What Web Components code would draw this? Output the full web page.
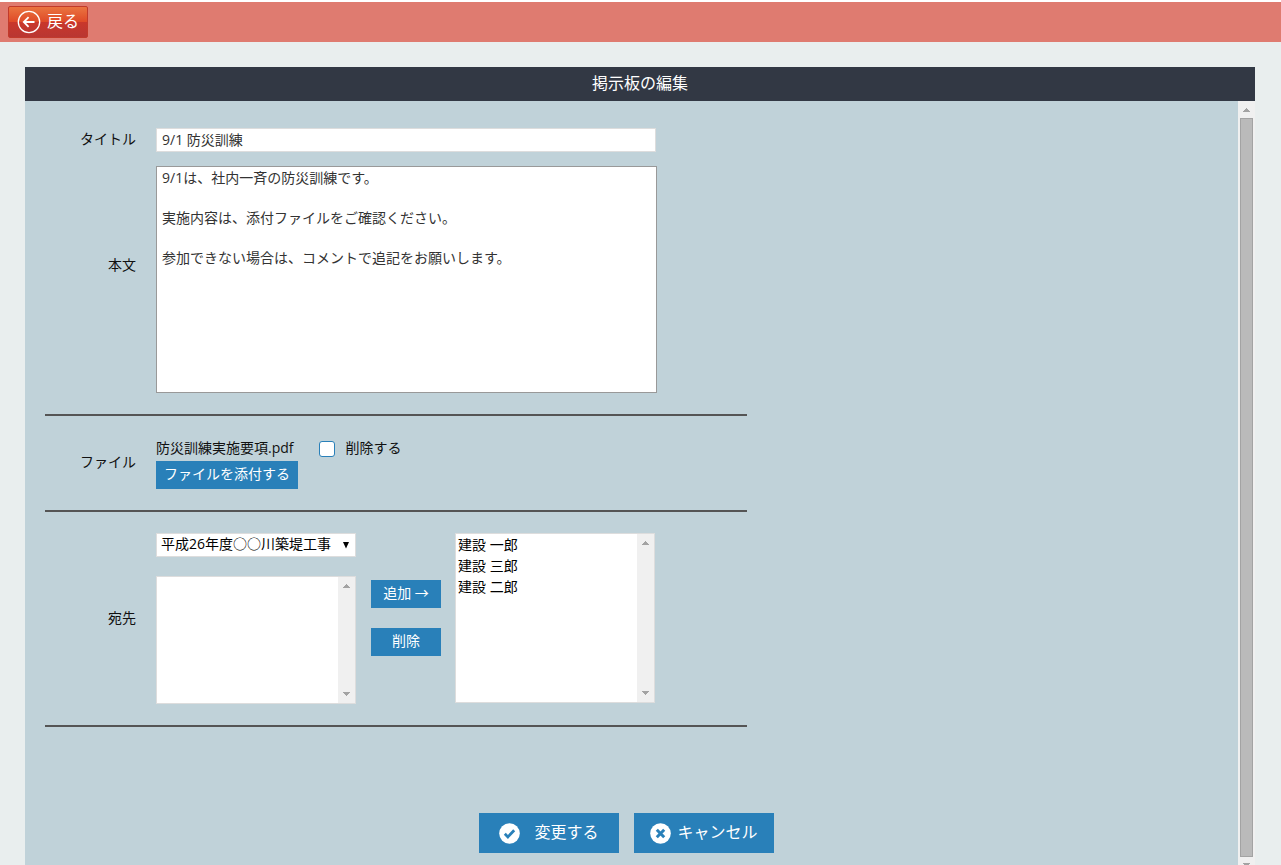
<!DOCTYPE html>
<html lang="ja">
<head>
<meta charset="utf-8">
<meta name="viewport" content="width=device-width, initial-scale=1">
<title>掲示板の編集</title>
<style>
  html { background: #e9eeee; }
  body {
    margin: 0;
    font-family: "Open Sans", "Noto Sans CJK JP", sans-serif;
    font-size: 14px;
    line-height: 20px;
    color: #111;
  }
</style>
</head>
<body>
<bulletin-page>
  <top-bar slot="bar"></top-bar>
  <edit-panel heading="掲示板の編集">
    <bulletin-form></bulletin-form>
  </edit-panel>
</bulletin-page>

<script>
const define = (name, html, setup) => {
  const template = document.createElement('template');
  template.innerHTML = html;
  customElements.define(name, class extends HTMLElement {
    constructor() {
      super();
      this.attachShadow({ mode: 'open' }).append(template.content.cloneNode(true));
    }
    connectedCallback() {
      if (setup) setup(this, this.shadowRoot);
    }
  });
};

define('bulletin-page', `
  <style>
    :host { display: block; height: 100vh; overflow: hidden; }
    main { padding: 25px 26px 25px 25px; }
  </style>
  <slot name="bar"></slot>
  <main><slot></slot></main>
`);

define('top-bar', `
  <style>
    :host { display: block; background: #df7b70; border-top: 2px solid #fff; }
    header { display: flex; padding: 4px 8px; }
    button {
      display: flex; align-items: center; gap: 6px;
      height: 32px; width: 80px; padding: 0 8px;
      border: 1px solid #c23a2b; border-radius: 2px;
      background: linear-gradient(#ea7440, #df4a28 49%, #c9372b 51%, #b93632);
      color: #fff; font: inherit; font-size: 16px; line-height: 24px; white-space: nowrap;
    }
    svg { flex: none; }
    span { padding-bottom: 2px; }
  </style>
  <header>
    <button type="button">
      <svg width="24" height="24" viewBox="0 0 24 24" fill="none" stroke="#fff" aria-hidden="true">
        <circle cx="12" cy="12" r="10.7" stroke-width="1.3"/>
        <path d="M17.5 12H7.2M11.6 7.2L6.8 12l4.8 4.8" stroke-width="1.8"/>
      </svg>
      <span>戻る</span>
    </button>
  </header>
`);

define('edit-panel', `
  <style>
    :host { display: block; }
    h1 {
      margin: 0; padding: 4px 0 6px; background: #323844; color: #fff;
      font-size: 16px; line-height: 24px; font-weight: 400; text-align: center;
    }
    .body { display: flex; background: #c0d2d9; }
    .content { flex: 1; min-width: 0; padding: 27px 20px 21px; }
  </style>
  <h1></h1>
  <div class="body">
    <div class="content"><slot></slot></div>
    <scroll-rail thumb></scroll-rail>
  </div>
`, (host, root) => {
  root.querySelector('h1').textContent = host.getAttribute('heading');
});

define('scroll-rail', `
  <style>
    :host { display: flex; flex-direction: column; align-items: center; width: 17px; flex: none; background: #f0f0f0; }
    svg { flex: none; display: block; fill: #a3a3a3; }
    i { flex: 1; width: 13px; box-sizing: border-box; }
    :host([thumb]) i { background: #bababa; border: 1px solid #a3a3a3; }
  </style>
  <svg width="17" height="17" viewBox="0 0 17 17" aria-hidden="true"><path d="M5 11V10h1V9h1V8h1V7h1v1h1v1h1v1h1v1z"/></svg>
  <i></i>
  <svg width="17" height="17" viewBox="0 0 17 17" aria-hidden="true"><path d="M5 6v1h1v1h1v1h1v1h1V9h1V8h1V7h1V6z"/></svg>
`);

define('form-section', `
  <style>
    :host {
      display: grid; grid-template-columns: 91px 1fr; column-gap: 20px; row-gap: 14px;
      align-items: center; max-width: 702px; box-sizing: border-box;
      padding: 21px 0; border-bottom: 2px solid #555;
    }
    :host([first]) { padding-top: 0; }
  </style>
  <slot></slot>
`);

define('list-frame', `
  <style>
    :host { display: flex; box-sizing: border-box; width: 200px; border: 1px solid #ddd; background: #fff; }
    div { flex: 1; min-width: 0; display: flex; }
  </style>
  <div><slot></slot></div>
  <scroll-rail></scroll-rail>
`);

define('ui-button', `
  <style>
    :host { display: inline-block; }
    button {
      display: flex; align-items: center; justify-content: center; gap: 6px;
      width: 100%; height: 28px; padding: 0 0 2px; border: 0;
      background: #2980b9; color: #fff; font: inherit; line-height: 20px; white-space: nowrap;
    }
    :host([large]) button { height: 40px; padding: 0; font-size: 16px; line-height: 24px; }
    :host([large]) span { padding-bottom: 2px; }
    :host([wide-gap]) button { gap: 14px; }
  </style>
  <button type="button"><slot name="icon"></slot><span><slot></slot></span></button>
`);

define('bulletin-form', `
  <style>
    :host { display: block; }
    form { margin: 0; }
    .name { text-align: right; padding-bottom: 2px; }
    .name.tall { padding-bottom: 30px; }
    input[type=text], textarea, select {
      font: inherit; box-sizing: border-box; margin: 0; border-radius: 0;
      background: #fff; color: #333; border: 1px solid #ddd;
    }
    input[type=text] { width: 500px; height: 24px; padding: 0 5px 2px; }
    textarea { display: block; width: 501px; height: 227px; padding: 1px 5px; border-color: #999; resize: none; line-height: 20px; }
    .file { display: flex; align-items: center; height: 24px; }
    .file span { padding-bottom: 2px; }
    .file label { display: flex; align-items: center; }
    input[type=checkbox] {
      appearance: none; width: 16px; height: 16px; margin: 0 11px 0 25px;
      background: #fff; border: 1px solid #2980b9; border-radius: 3px;
    }
    .attach { display: block; width: 142px; }
    .recipients { display: flex; gap: 14px; align-items: flex-start; }
    .source { display: grid; width: 200px; row-gap: 19px; }
    .picker { display: grid; align-items: center; }
    .picker > * { grid-area: 1 / 1; }
    .picker select { appearance: none; width: 100%; height: 24px; padding: 0 4px 2px; color: #000; }
    .picker svg { justify-self: end; margin-right: 6px; pointer-events: none; }
    list-frame select { flex: 1; width: 100%; height: auto; border: 0; padding: 0; overflow: hidden; color: #000; outline: 0; }
    option { padding: 0 2px; min-height: 21px; line-height: 17px; box-sizing: border-box; }
    .source list-frame { height: 128px; }
    .chosen { height: 170px; }
    .moves { display: grid; width: 70px; gap: 20px; padding: 47px 0 0 1px; }
    .actions { display: flex; justify-content: center; gap: 15px; padding: 86px 10px 0 0; }
    .actions ui-button { width: 140px; }
    .actions svg { display: block; }
  </style>
  <form>
    <form-section first>
      <label class="name" for="title">タイトル</label>
      <input type="text" id="title" value="9/1 防災訓練">
      <label class="name tall" for="body">本文</label>
      <textarea id="body">9/1は、社内一斉の防災訓練です。

実施内容は、添付ファイルをご確認ください。

参加できない場合は、コメントで追記をお願いします。</textarea>
    </form-section>

    <form-section>
      <span class="name">ファイル</span>
      <div>
        <div class="file">
          <span>防災訓練実施要項.pdf</span>
          <label><input type="checkbox"><span>削除する</span></label>
        </div>
        <ui-button class="attach">ファイルを添付する</ui-button>
      </div>
    </form-section>

    <form-section>
      <label class="name" for="project">宛先</label>
      <div class="recipients">
        <div class="source">
          <div class="picker">
            <select id="project"><option>平成26年度○○川築堤工事</option></select>
            <svg width="8" height="8" viewBox="0 0 8 8" aria-hidden="true"><path d="M1 1h6L4 7.5z"/></svg>
          </div>
          <list-frame><select multiple size="5" aria-label="候補"></select></list-frame>
        </div>
        <div class="moves">
          <ui-button>追加 →</ui-button>
          <ui-button>削除</ui-button>
        </div>
        <list-frame class="chosen">
          <select multiple size="7" aria-label="宛先一覧">
            <option>建設 一郎</option>
            <option>建設 三郎</option>
            <option>建設 二郎</option>
          </select>
        </list-frame>
      </div>
    </form-section>

    <div class="actions">
      <ui-button large wide-gap>
        <svg slot="icon" width="21" height="21" viewBox="0 0 21 21" aria-hidden="true">
          <circle cx="10.5" cy="10.5" r="10.3" fill="#fff"/>
          <path d="M5.8 10.8l3.1 3.1 6.3-6.6" fill="none" stroke="#2980b9" stroke-width="2.8"/>
        </svg>変更する</ui-button>
      <ui-button large>
        <svg slot="icon" width="21" height="21" viewBox="0 0 21 21" aria-hidden="true">
          <circle cx="10.5" cy="10.5" r="10.3" fill="#fff"/>
          <path d="M6.8 6.8l7.4 7.4M14.2 6.8l-7.4 7.4" fill="none" stroke="#2980b9" stroke-width="3"/>
        </svg>キャンセル</ui-button>
    </div>
  </form>
`);
</script>
</body>
</html>
